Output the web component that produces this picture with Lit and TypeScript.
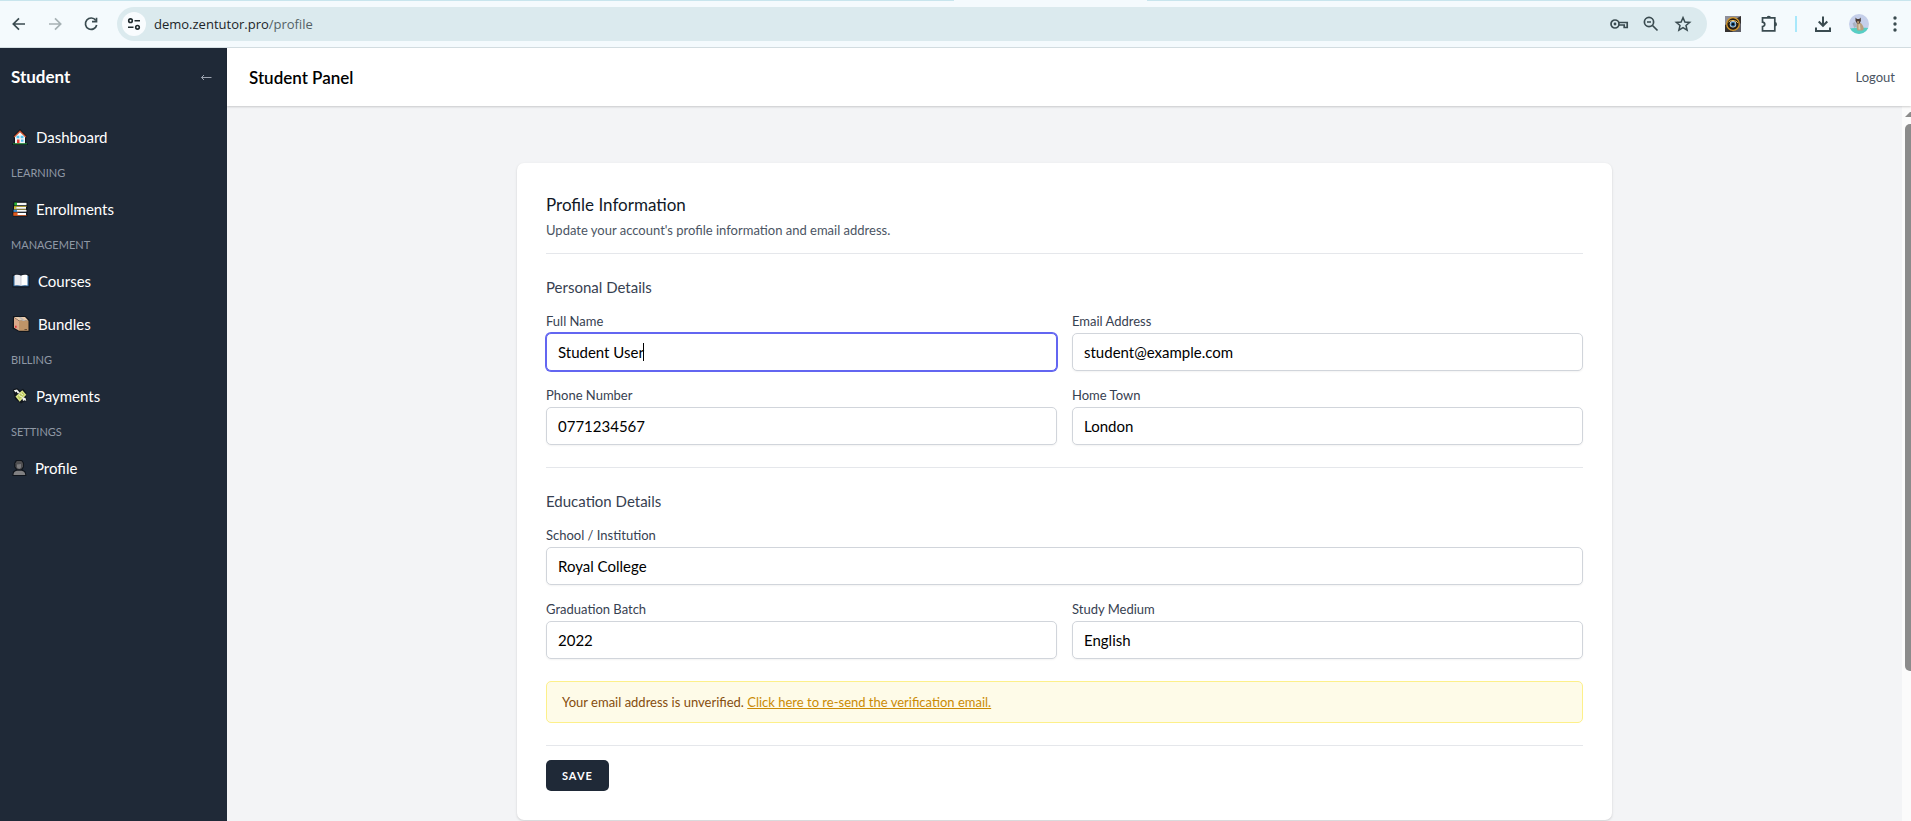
import { LitElement, html, css, svg, nothing, type TemplateResult } from "lit";
import { customElement, property } from "lit/decorators.js";
import { classMap } from "lit/directives/class-map.js";

const stroke = (body: TemplateResult) => html`<svg viewBox="0 0 20 20" width="20" height="20" fill="none" stroke="currentColor" stroke-width="1.7" aria-hidden="true">${body}</svg>`;

const toolbarIcons = {
  back: stroke(svg`<path d="M16 10H4.500M10 4.300 4.300 10l5.700 5.700"/>`),
  forward: stroke(svg`<path d="M4 10h11.500M10 4.300 15.700 10 10 15.700"/>`),
  reload: stroke(svg`<path d="M14.800 6.400A5.700 5.700 0 1 0 15.700 11"/><path d="M15.500 3.700v4h-4.500" />`),
  key: stroke(svg`<circle cx="6" cy="10" r="4"/><circle cx="6" cy="10" r="1.400" fill="currentColor" stroke="none"/><path d="M9.800 8.500H18.200v5h-3v-2.500H9.800"/>`),
  zoomOut: stroke(svg`<circle cx="8" cy="8" r="4.600"/><path d="m11.500 11.500 5 5M6 8h4"/>`),
  star: stroke(svg`<path stroke-width="1.500" d="m10 3.600 1.900 4.400 4.800.4-3.700 3.100 1.100 4.700-4.100-2.500-4.100 2.500 1.100-4.700-3.700-3.100 4.800-.4z"/>`),
  puzzle: stroke(svg`<path d="M3.500 3.900h12.300v12.900H3.500v-4.300c3-.3 3-4 0-4.300z"/><path d="M7.600 3.900a2.200 2.200 0 0 1 4.400 0zM15.800 8a2.200 2.200 0 0 1 0 4.400z" fill="currentColor" stroke="none"/>`),
  download: stroke(svg`<path stroke-width="2" d="M10 2.500v8.800M5.700 7.500 10 11.800l4.300-4.300M3 13.500V17h14v-3.500"/>`),
  more: html`<svg viewBox="0 0 20 20" width="20" height="20" fill="currentColor" aria-hidden="true"><circle cx="10" cy="4" r="1.700"/><circle cx="10" cy="10" r="1.700"/><circle cx="10" cy="16" r="1.700"/></svg>`,
  tune: html`<svg viewBox="0 0 14 14" width="14" height="14" fill="none" stroke="currentColor" stroke-width="1.600" aria-hidden="true"><circle cx="3.500" cy="3.700" r="1.800"/><path d="M7.500 3.700H13M1 10.300h5.500"/><circle cx="10.500" cy="10.300" r="1.800"/></svg>`,
  eye: html`<svg viewBox="0 0 16 16" width="16" height="16" aria-hidden="true"><rect width="16" height="16" fill="#33302f"/><path d="M0 0h16L0 9z" fill="#8d8f9b"/><path d="M16 7v9H7z" fill="#5f6068"/><circle cx="8" cy="8" r="6.300" fill="#241c12" stroke="#d79a2b" stroke-width="1.300"/><path d="M3 6.500C5 3.700 11 3.700 13 7" fill="none" stroke="#f4c55b" stroke-width="1"/><circle cx="8" cy="8.300" r="3.200" fill="#dfe7ec"/><circle cx="8" cy="8.300" r="2.500" fill="#2e6e9c"/><circle cx="8" cy="8.300" r="1.300" fill="#06090f"/></svg>`,
  avatar: html`<svg viewBox="0 0 20 20" width="20" height="20" aria-hidden="true"><clipPath id="disc"><circle cx="10" cy="10" r="10"/></clipPath><g clip-path="url(#disc)"><rect width="20" height="20" fill="#c5cfea"/><path d="M0 14.500c6-1 13-1 20-.5v6H0z" fill="#56cfc4"/><path d="M3.500 9.500 6 7.800l1.800 4.700-2.500 1.500z" fill="#a9b1c2"/><path d="M7.500 9.500 11 8.500c1.800 1 3.500 3.200 3.800 6.500l-1.300 1.500H8.500L7.700 14z" fill="#b79f7e"/><path d="M9.500 10.500 11 10l.5 5.500h-2z" fill="#dccbb0"/><path d="M6.500 3.500 8 5h2.200l1.500-1.500.2 3.500-1.500 2.500H8L6.500 7z" fill="#4a3c36"/><path d="M8 7.200h2.300l-.6 2H8.500z" fill="#c9a87e"/></g></svg>`,
};

const navIcons: Record<string, TemplateResult> = {
  house: html`<svg viewBox="0 0 16 16" width="16" height="16" aria-hidden="true"><path d="M0 14.500h1.800V8L.6 7.500 8 0l7.400 7.500-1.200.8v6.200H16V16H0z" fill="#10151c"/><path d="M3 7.200 8 2.300l5 4.900v7.300H3z" fill="#f4f4f6"/><path d="M1.500 7.700 8 1.200l6.500 6.500-1 .7L8 3.200 2.500 8.400z" fill="#c8502f"/><path d="M4.500 6.800h2.800v2.500H4.500zM8.700 6.800h2.800v2.500H8.700zM9 10.500h2.500v2.200H9z" fill="#52c4f2"/><path d="M5 10.500h2.500v4H5z" fill="#e83f35"/><path d="M1 14.300h14v1H1z" fill="#1f9438"/></svg>`,
  books: html`<svg viewBox="0 0 16 16" width="16" height="16" aria-hidden="true"><path d="M1.500.5h14v15H1L.3 12 1 7z" fill="#10151c"/><path d="M5 1.800h9.500v2.400H5z" fill="#f6f6f6"/><path d="M2.300 1.500H5v3H2.300z" fill="#29b635"/><path d="M2 5.200h12.500v.8H4.200v1.800H14v.7H2z" fill="#d8c037"/><path d="M4.200 6h9.800v1.800H4.200z" fill="#f6f6f6"/><path d="M5 8.900h9.500v1.800H5z" fill="#f6f6f6"/><path d="M1.500 8.700H5v2.200H1.500z" fill="#3c90d8"/><path d="M1.300 11.400h4.500v3.400H1.300z" fill="#e55a1c"/><path d="M5.500 11.900H14v2.300H5.500z" fill="#fff"/><path d="M5.500 14.200h9v.7h-9z" fill="#e55a1c"/></svg>`,
  book: html`<svg viewBox="0 0 18 16" width="18" height="16" aria-hidden="true"><path d="M.5 1.500h17v13H.5z" fill="#10151c"/><path d="M1.300 2.800h15.400v10.500H1.300z" fill="#2d6396"/><path d="M2.500 2.200C5 1.600 7.500 1.800 9 2.800v10C7.500 12 5 12 2.500 12.500z" fill="#ececf0"/><path d="M9 2.800c1.500-1 4-1.200 6.500-.6v10.300C13 12 10.500 12 9 12.800z" fill="#fff"/><path d="M9 3v9.700" stroke="#b9bcc5" stroke-width=".7"/></svg>`,
  box: html`<svg viewBox="0 0 18 16" width="18" height="16" aria-hidden="true"><path d="M1 0h12.500L17.500 4v12H7.500L.5 12.500z" fill="#10151c"/><path d="M2 1h11l3.500 3.700H7z" fill="#e9c9aa"/><path d="M2 1.300 7 5v9.800l-5-3z" fill="#d9a98a"/><path d="M7 4.900h9.500v9.900H7z" fill="#bf9468"/><path d="m6.500 1 4.500 3.900h2.300L8.800 1z" fill="#b9b6b3"/><path d="M3 9.800h1.600v2H3z" fill="#e0303d"/><path d="M12.500 13h2.500v1h-2.500z" fill="#6b5036"/></svg>`,
  money: html`<svg viewBox="0 0 16 16" width="16" height="16" aria-hidden="true"><path d="M1 1.500 5 0l3 2.500L11 .8 14.500 5 14 9l1 4-3 .5L9 15.500 3 11 2 6z" fill="#10151c"/><path d="m3.500 8.500 6.800-6.200 4 4.500-6.600 7z" fill="#dbe58a"/><path d="m5.500 8.500 5-4.500 2 2.600-5 5z" fill="#bac75c"/><path d="m7 7.500 3 1.500M9 5.500l2 1.500" stroke="#f5f7d8"/><path d="M1.800 2.200 5 1.500l3.500 4-3-.3-1-1.700-1 1zM10 9l3.500 1 .8 3-1.800-.7L11 13z" fill="#f2f3ee"/></svg>`,
  person: html`<svg viewBox="0 0 15 16" width="15" height="16" aria-hidden="true"><path d="M4 0h6l2 3v4l-1.500 2.500 3 2 1 4.500H.3L1 11.500l3-2L2.200 7V3z" fill="#10151c"/><path d="M4.800 1h4.600L11 3.200v3.600L9 9.200H5.300L3.400 6.700V3.200z" fill="#4e4e50"/><path d="M5 4.500 9 4v3.500L7.200 9 5 7.500z" fill="#7c7c7e"/><path d="M1.500 15c0-2.800 1.300-4 3.500-4.300h4.500c2.200.3 3.700 1.500 3.700 4.300z" fill="#7f7f81"/></svg>`,
};

@customElement("browser-bar")
class BrowserBar extends LitElement {
  static styles = css`
    :host { display: block; background: #f4fafd; border-bottom: 1px solid #d5dfe3; font-family: "Open Sans", sans-serif; color: #3a4b50; }
    .tabs { display: grid; grid-template-columns: 954fr 193fr 764fr; height: 1px; }
    .tab-edge { background: #c8e5ed; }
    .bar { display: flex; align-items: center; gap: 16px; padding: 6px 6px 6px 9px; }
    button { display: grid; place-items: center; flex: none; width: 20px; height: 20px; padding: 0; border: 0; background: none; color: inherit; }
    button:disabled { color: #a6b1b4; }
    svg { display: block; }
    .pill { display: flex; align-items: center; flex: 1; gap: 12px; height: 34px; padding: 0 14px 0 5px; box-sizing: border-box; border-radius: 17px; background: #dbeaee; }
    .site { display: flex; align-items: center; flex: 1; gap: 8px; }
    .site button { width: 24px; height: 24px; border-radius: 50%; background: #f9fcfe; color: #1f2a2d; }
    .url { font-size: 13px; line-height: 20px; color: #1c2528; }
    .path { color: #546165; }
    .split { flex: none; width: 2px; height: 16px; background: #a8e8fb; }
  `;
  render() {
    const i = toolbarIcons;
    return html`
      <div class="tabs"><span class="tab-edge"></span><span></span><span class="tab-edge"></span></div>
      <div class="bar">
        <button aria-label="Back">${i.back}</button>
        <button aria-label="Forward" disabled>${i.forward}</button>
        <button aria-label="Reload">${i.reload}</button>
        <div class="pill">
          <div class="site">
            <button aria-label="Site information">${i.tune}</button>
            <span class="url">demo.zentutor.pro<span class="path">/profile</span></span>
          </div>
          <button aria-label="Passwords">${i.key}</button>
          <button aria-label="Zoom">${i.zoomOut}</button>
          <button aria-label="Bookmark">${i.star}</button>
        </div>
        <button aria-label="Viewer extension">${i.eye}</button>
        <button aria-label="Extensions">${i.puzzle}</button>
        <span class="split"></span>
        <button aria-label="Downloads">${i.download}</button>
        <button aria-label="Account">${i.avatar}</button>
        <button aria-label="Menu">${i.more}</button>
      </div>`;
  }
}

interface NavGroup { label?: string; items: { icon: string; text: string }[] }

const NAV: NavGroup[] = [
  { items: [{ icon: "house", text: "Dashboard" }] },
  { label: "Learning", items: [{ icon: "books", text: "Enrollments" }] },
  { label: "Management", items: [{ icon: "book", text: "Courses" }, { icon: "box", text: "Bundles" }] },
  { label: "Billing", items: [{ icon: "money", text: "Payments" }] },
  { label: "Settings", items: [{ icon: "person", text: "Profile" }] },
];

@customElement("side-nav")
class SideNav extends LitElement {
  static styles = css`
    :host { display: block; background: #1f2937; color: #fff; font-family: Lato, sans-serif; }
    .head { display: flex; align-items: center; justify-content: space-between; height: 57px; padding: 0 14px 0 11px; }
    h1 { margin: 0; font-size: 17px; line-height: 25px; font-weight: 700; }
    button { display: grid; place-items: center; width: 14px; height: 20px; padding: 0; border: 0; background: none; color: #9ca3af; }
    nav { display: flex; flex-direction: column; gap: 7px; padding: 14px 0; }
    .label { padding: 0 11px; font-size: 11px; line-height: 22px; color: #8f98a5; text-transform: uppercase; }
    a { display: flex; align-items: center; gap: 8px; height: 36px; padding: 0 12px; color: #fff; font-size: 15px; line-height: 22px; font-weight: 400; text-decoration: none; }
  `;
  render() {
    return html`
      <div class="head">
        <h1>Student</h1>
        <button aria-label="Collapse sidebar"><svg viewBox="0 0 14 10" width="14" height="10" fill="none" stroke="currentColor" aria-hidden="true"><path d="M12.500 5.500H2.500M5 3 2.500 5.500 5 8"/></svg></button>
      </div>
      <nav>
        ${NAV.map((g) => html`
          ${g.label ? html`<span class="label">${g.label}</span>` : nothing}
          ${g.items.map((n) => html`<a href="#">${navIcons[n.icon]}<span>${n.text}</span></a>`)}`)}
      </nav>`;
  }
}

@customElement("text-field")
class TextField extends LitElement {
  @property() label = "";
  @property() value = "";
  @property() type = "text";
  @property({ type: Boolean }) editing = false;
  static styles = css`
    :host { display: block; font-family: Lato, sans-serif; }
    label { display: block; font-size: 13px; line-height: 18px; font-weight: 400; color: #374151; }
    .box { position: relative; margin-top: 3px; }
    input { display: block; width: 100%; height: 38px; box-sizing: border-box; padding: 0 11px; border: 1px solid #d1d5db; border-radius: 5px; background: #fff; box-shadow: 0 1px 2px rgb(0 0 0 / 5%); color: #000; font: 400 15px/22px Lato, sans-serif; outline: none; }
    .active { border-color: #6366f1; box-shadow: 0 0 0 1px #6366f1; caret-color: transparent; }
    .caret { position: absolute; left: 97px; top: 10px; width: 1px; height: 18px; background: #000; }
  `;
  render() {
    return html`
      <label for="field">${this.label}</label>
      <div class="box">
        <input id="field" class=${classMap({ active: this.editing })} type=${this.type} .value=${this.value} />
        ${this.editing ? html`<span class="caret"></span>` : nothing}
      </div>`;
  }
}

@customElement("profile-card")
class ProfileCard extends LitElement {
  static styles = css`
    :host { display: block; padding: 29px; border-radius: 7px; background: #fff; box-shadow: 0 1px 3px rgb(0 0 0 / 10%), 0 1px 2px rgb(0 0 0 / 6%); font-family: Lato, sans-serif; }
    header { padding-bottom: 14px; border-bottom: 1px solid #e5e7eb; }
    h2, h3, p { margin: 0; }
    h2 { font-size: 17px; line-height: 25px; font-weight: 400; color: #111827; }
    .hint { margin-top: 4px; font-size: 13px; line-height: 18px; color: #4b5563; }
    .section { padding: 22px 0; border-bottom: 1px solid #e5e7eb; }
    h3 { margin-bottom: 14px; font-size: 15px; line-height: 22px; font-weight: 400; color: #374151; }
    .fields { display: grid; grid-template-columns: 1fr 1fr; gap: 15px; }
    .wide { grid-column: 1 / -1; }
    .notice { margin-top: 22px; padding: 11px 15px; border: 1px solid #fdf08a; border-radius: 5px; background: #fefbe8; font-size: 13px; line-height: 18px; color: #854d0e; }
    .notice a { color: #ca8a04; }
    .save { display: block; height: 31px; margin-top: 14px; padding: 0 16px; border: 0; border-radius: 5px; background: #1f2937; color: #fff; font: 700 11px/14px Lato, sans-serif; letter-spacing: 1px; text-transform: uppercase; }
  `;
  render() {
    return html`
      <header>
        <h2>Profile Information</h2>
        <p class="hint">Update your account's profile information and email address.</p>
      </header>
      <form>
        <div class="section">
          <h3>Personal Details</h3>
          <div class="fields">
            <text-field label="Full Name" value="Student User" editing></text-field>
            <text-field label="Email Address" value="student@example.com" type="email"></text-field>
            <text-field label="Phone Number" value="0771234567" type="tel"></text-field>
            <text-field label="Home Town" value="London"></text-field>
          </div>
        </div>
        <div class="section">
          <h3>Education Details</h3>
          <div class="fields">
            <text-field class="wide" label="School / Institution" value="Royal College"></text-field>
            <text-field label="Graduation Batch" value="2022"></text-field>
            <text-field label="Study Medium" value="English"></text-field>
          </div>
          <p class="notice">Your email address is unverified. <a href="#">Click here to re-send the verification email.</a></p>
        </div>
        <button class="save" type="button">Save</button>
      </form>`;
  }
}

@customElement("app-root")
class AppRoot extends LitElement {
  static styles = css`
    :host { display: flex; flex-direction: column; height: 100vh; overflow: hidden; font-family: Lato, sans-serif; }
    .shell { display: grid; grid-template-columns: 227px 1fr; flex: 1; min-height: 0; }
    .panel { display: flex; flex-direction: column; min-width: 0; min-height: 0; background: #f3f4f6; }
    .top { z-index: 1; display: flex; align-items: center; justify-content: space-between; height: 58px; flex: none; padding: 0 16px 0 22px; background: #fff; box-shadow: 0 1px 2px rgb(0 0 0 / 18%); }
    .top h2 { margin: 0; font-size: 17px; line-height: 25px; font-weight: 600; color: #000; }
    .top a { font-size: 13px; line-height: 18px; color: #4b5563; text-decoration: none; }
    .body { display: flex; flex: 1; min-height: 0; }
    main { flex: 1; min-width: 0; padding: 57px 0; overflow: hidden; }
    .container { max-width: 1153px; box-sizing: border-box; margin: 0 auto; padding: 0 29px; }
    .scroll { display: flex; flex-direction: column; flex: none; width: 9px; box-sizing: border-box; padding: 5px 0 0 3px; overflow: hidden; background: #fbfbfb; }
    .scroll svg { display: block; flex: none; }
    .thumb { width: 12px; height: 77%; margin-top: 6px; border-radius: 5px; background: #8b8b8b; }
  `;
  render() {
    return html`
      <browser-bar></browser-bar>
      <div class="shell">
        <side-nav></side-nav>
        <div class="panel">
          <div class="top"><h2>Student Panel</h2><a href="#">Logout</a></div>
          <div class="body">
            <main><div class="container"><profile-card></profile-card></div></main>
            <div class="scroll" aria-hidden="true">
              <svg viewBox="0 0 12 7" width="12" height="7"><path d="M0 6 5 1h2l5 5z" fill="#8b8b8b"/></svg>
              <div class="thumb"></div>
            </div>
          </div>
        </div>
      </div>`;
  }
}
